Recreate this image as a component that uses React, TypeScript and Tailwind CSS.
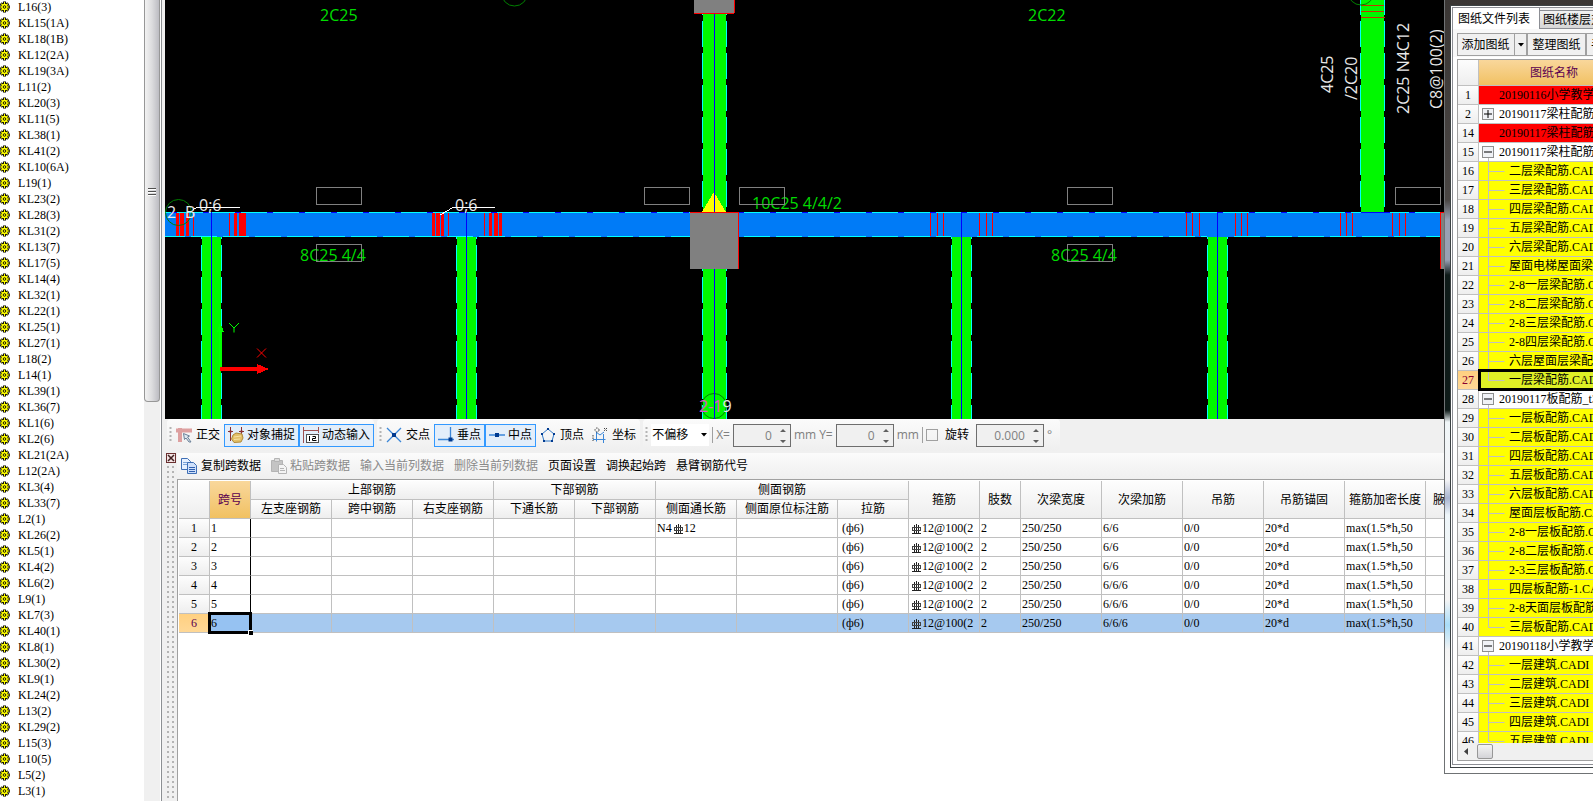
import { ReactNode, useState } from 'react';
import clsx from 'clsx';

const MEMBERS = [
  'L16(3)', 'KL15(1A)', 'KL18(1B)', 'KL12(2A)', 'KL19(3A)', 'L11(2)', 'KL20(3)', 'KL11(5)', 'KL38(1)', 'KL41(2)',
  'KL10(6A)', 'L19(1)', 'KL23(2)', 'KL28(3)', 'KL31(2)', 'KL13(7)', 'KL17(5)', 'KL14(4)', 'KL32(1)', 'KL22(1)',
  'KL25(1)', 'KL27(1)', 'L18(2)', 'L14(1)', 'KL39(1)', 'KL36(7)', 'KL1(6)', 'KL2(6)', 'KL21(2A)', 'L12(2A)',
  'KL3(4)', 'KL33(7)', 'L2(1)', 'KL26(2)', 'KL5(1)', 'KL4(2)', 'KL6(2)', 'L9(1)', 'KL7(3)', 'KL40(1)',
  'KL8(1)', 'KL30(2)', 'KL9(1)', 'KL24(2)', 'L13(2)', 'KL29(2)', 'L15(3)', 'L10(5)', 'L5(2)', 'L3(1)'
];

type Kind = 'red' | 'open' | 'closed' | 'child' | 'last';

const SHEETS: { no: number; name: string; kind: Kind }[] = [
  { no: 1, name: '20190116小学教学楼', kind: 'red' },
  { no: 2, name: '20190117梁柱配筋_t3', kind: 'closed' },
  { no: 14, name: '20190117梁柱配筋_t3', kind: 'red' },
  { no: 15, name: '20190117梁柱配筋_t3', kind: 'open' },
  { no: 16, name: '二层梁配筋.CADI', kind: 'child' },
  { no: 17, name: '三层梁配筋.CADI', kind: 'child' },
  { no: 18, name: '四层梁配筋.CADI', kind: 'child' },
  { no: 19, name: '五层梁配筋.CADI', kind: 'child' },
  { no: 20, name: '六层梁配筋.CADI', kind: 'child' },
  { no: 21, name: '屋面电梯屋面梁配筋', kind: 'child' },
  { no: 22, name: '2-8一层梁配筋.CADI', kind: 'child' },
  { no: 23, name: '2-8二层梁配筋.CADI', kind: 'child' },
  { no: 24, name: '2-8三层梁配筋.CADI', kind: 'child' },
  { no: 25, name: '2-8四层梁配筋.CADI', kind: 'child' },
  { no: 26, name: '六层屋面层梁配筋', kind: 'child' },
  { no: 27, name: '一层梁配筋.CADI', kind: 'last' },
  { no: 28, name: '20190117板配筋_t3', kind: 'open' },
  { no: 29, name: '一层板配筋.CADI', kind: 'child' },
  { no: 30, name: '二层板配筋.CADI', kind: 'child' },
  { no: 31, name: '四层板配筋.CADI', kind: 'child' },
  { no: 32, name: '五层板配筋.CADI', kind: 'child' },
  { no: 33, name: '六层板配筋.CADI', kind: 'child' },
  { no: 34, name: '屋面层板配筋.CADI', kind: 'child' },
  { no: 35, name: '2-8一层板配筋.CADI', kind: 'child' },
  { no: 36, name: '2-8二层板配筋.CADI', kind: 'child' },
  { no: 37, name: '2-3三层板配筋.CADI', kind: 'child' },
  { no: 38, name: '四层板配筋-1.CADI', kind: 'child' },
  { no: 39, name: '2-8天面层板配筋', kind: 'child' },
  { no: 40, name: '三层板配筋.CADI', kind: 'last' },
  { no: 41, name: '20190118小学教学楼', kind: 'open' },
  { no: 42, name: '一层建筑.CADI', kind: 'child' },
  { no: 43, name: '二层建筑.CADI', kind: 'child' },
  { no: 44, name: '三层建筑.CADI', kind: 'child' },
  { no: 45, name: '四层建筑.CADI', kind: 'child' },
  { no: 46, name: '五层建筑.CADI', kind: 'last' }
];

const COLS = [31, 41, 81, 81, 81, 81, 81, 81, 101, 71, 71, 41, 81, 81, 81, 81, 81, 81];
const SPANS = ['6/6', '6/6', '6/6', '6/6/6', '6/6/6', '6/6/6'];

const song = "font-['Liberation_Serif','Noto_Sans_CJK_SC',serif]";
const headCell = 'border-r border-b border-[#c0c0c0] bg-linear-to-b from-[#fdfdfd] to-[#eeeeee] p-0 text-center font-normal whitespace-nowrap';
const bodyCell = 'h-[19px] border-r border-b border-[#c0c0c0] p-0 pl-px whitespace-nowrap overflow-hidden';

function Gear() {
  return (
    <svg width="10" height="12" viewBox="0 0 10 12" className="shrink-0">
      <path d="M4.500 .5v11M-1 6h11M.8 2.300l7.400 7.400M8.200 2.300L.8 9.700" stroke="#000" strokeWidth="3" />
      <path d="M4.500 1v10M-.5 6h10M1.200 2.700l6.600 6.600M7.800 2.700L1.200 9.300" stroke="#ffff00" strokeWidth="1.100" />
      <circle cx="4.500" cy="6" r="2.500" fill="#ffff00" stroke="#ffff00" strokeWidth="1.400" />
      <circle cx="4.500" cy="6" r="1.300" fill="#ffff00" stroke="#000" strokeWidth="0.900" />
    </svg>
  );
}

function MemberList() {
  return (
    <aside className="flex shrink-0 border-r border-[#8c8f93]">
      <ul className={clsx('-mt-px w-36 text-xs leading-4', song)}>
        {MEMBERS.map((m) => (
          <li key={m} className="flex h-4 items-center gap-2">
            <Gear />
            {m}
          </li>
        ))}
      </ul>
      <div className="w-[17px] border-r border-white bg-[#f0f0f0]">
        <div className="flex h-[402px] items-center justify-center rounded-b-sm border border-t-0 border-[#979797] bg-linear-to-r from-[#f2f2f2] via-[#dcdcde] to-[#bcbcc2]">
          <svg width="8" height="9" className="mb-4" shapeRendering="crispEdges">
            <path d="M0 .5h8M0 3.500h8M0 6.500h8" stroke="#505050" />
            <path d="M0 1.500h8M0 4.500h8M0 7.500h8" stroke="#fff" />
          </svg>
        </div>
      </div>
    </aside>
  );
}

const beams = [
  { x: 201, w: 21, y1: 237, y2: 419 },
  { x: 456, w: 21, y1: 237, y2: 419 },
  { x: 702, w: 25, y1: 14, y2: 212 },
  { x: 702, w: 25, y1: 269, y2: 419 },
  { x: 951, w: 21, y1: 237, y2: 419 },
  { x: 1207, w: 21, y1: 237, y2: 419 },
  { x: 1360, w: 25, y1: 0, y2: 212 }
];

// [x, width] of the stirrup bars
const stirrups = [
  [176, 3], [180, 4], [186, 3], [193, 1], [229, 1], [234, 3], [239, 7],
  [432, 3], [436, 4], [441, 3], [448, 1], [484, 1], [489, 3], [494, 4], [499, 3],
  [930, 1], [937, 1], [943, 1], [979, 1], [986, 1], [992, 1],
  [1186, 1], [1192, 1], [1199, 1], [1235, 1], [1241, 1], [1247, 1],
  [1340, 1], [1346, 1], [1352, 1], [1392, 1], [1399, 1], [1405, 1]
];

const tags = [[316, 187], [644, 187], [739, 187], [1067, 187], [1395, 187], [316, 244], [1067, 244]];

// [from, to, dash offset]
const topEdge = [[165, 690, 20], [738, 961, 26], [961, 1217, 26], [1217, 1440, 26]];
const bottomEdge = [[165, 690, 6], [738, 951, 26], [972, 1207, 27], [1228, 1440, 26]];

function Drawing() {
  return (
    <svg className="h-[419px] w-full shrink-0 bg-black font-['Open_Sans','Noto_Sans',sans-serif]" shapeRendering="crispEdges">
      <g transform="translate(-165 0)">
        {beams.map((b) => {
          const sides = `M${b.x + 0.5} ${b.y1}V${b.y2}M${b.x + b.w - 0.5} ${b.y1}V${b.y2}`;
          return (
            <g key={`${b.x}-${b.y1}`}>
              <rect x={b.x} y={b.y1} width={b.w} height={b.y2 - b.y1} fill="#00f800" />
              <path d={sides} stroke="#000" />
              <path d={sides} stroke="#00ffff" strokeDasharray="26 6" strokeDashoffset={(b.y1 + 11) % 32} />
            </g>
          );
        })}
        <rect x="165" y="212" width="1275" height="25" fill="#007bf7" />
        <path d="M165 212.500H1440" stroke="#0000ff" />
        {topEdge.map(([a, b, o]) => (
          <path key={a} d={`M${a} 212.5H${b}`} stroke="#00ffff" strokeDasharray="26 6" strokeDashoffset={o} />
        ))}
        {bottomEdge.map(([a, b, o]) => (
          <path key={a} d={`M${a} 236.5H${b}`} stroke="#00ffff" strokeDasharray="26 6" strokeDashoffset={o} />
        ))}
        <path d="M1361 212.500h29" stroke="#0000ff" />
        <path d="M211.500 212V419M466.500 212V419M961.500 212V419M1217.500 212V419" stroke="#0000ff" />
        {stirrups.map(([x, w]) => (
          <rect key={x} x={x} y="213" width={w} height="23" fill="#ff0000" />
        ))}
        <path d="M1361 5.500h23M1361 11.500h23M1361 17.500h24" stroke="#c83200" />
        <path d="M714 192L702 212h24z" fill="#ffff00" />
        <rect x="694" y="0" width="40" height="13" fill="#808080" />
        <path d="M694 13.500h40M734.500 0v13" stroke="#ff0000" />
        <g fill="none" stroke="#007f00" shapeRendering="auto">
          <circle cx="514.500" cy="-7" r="13" />
          <circle cx="1361" cy="-8" r="13" />
          <circle cx="178.500" cy="212.500" r="13" />
          <circle cx="714" cy="406" r="12.500" />
        </g>
        <g fontSize="16" shapeRendering="auto">
          <g fill="#00dc00">
            <text x="320" y="21">2C25</text>
            <text x="1028" y="21">2C22</text>
            <text x="300" y="261">8C25 4/4</text>
            <text x="1051" y="261">8C25 4/4</text>
            <text x="752" y="209">10C25 4/4/2</text>
          </g>
          <g fill="#e8e8e8">
            <text x="199" y="211">0;6</text>
            <text x="455" y="211">0;6</text>
            <text x="167" y="218">2</text>
            <text x="185" y="218">B</text>
            <text x="699" y="412"><tspan fill="#e050d0">2-1</tspan>9</text>
            <text transform="translate(1333 93) rotate(-90)">4C25</text>
            <text transform="translate(1357 100) rotate(-90)">/2C20</text>
            <text transform="translate(1409 114) rotate(-90)">2C25 N4C12</text>
            <text transform="translate(1442 109) rotate(-90)">C8@100(2)</text>
          </g>
        </g>
        <path d="M714.500 14V419" stroke="#0000ff" />
        <rect x="690" y="212" width="48" height="57" fill="#808080" />
        <path d="M690 212.500h48.500V269" fill="none" stroke="#ff0000" />
        <rect x="1441" y="213" width="40" height="56" fill="#808080" />
        <path d="M1480 212.500h-39.500V269" fill="none" stroke="#ff0000" />
        <path d="M193 209.500l4-2h43M440 215l13-7.500h42" fill="none" stroke="#fff" />
        <g fill="none" stroke="#808080">
          {tags.map(([x, y]) => (
            <rect key={`${x}-${y}`} x={x + 0.5} y={y + 0.5} width="45" height="17" />
          ))}
        </g>
        <path d="M219 369V332h-2l3-10 4 10h-2v37z" fill="#00ff00" />
        <path d="M220 367h37v-3l12 5-12 5v-3h-37z" fill="#ff0000" />
        <g fill="none" shapeRendering="auto">
          <path d="M257 348.500l9 9M266 348.500l-9 9" stroke="#ff0000" />
          <path d="M229 323l5 5 5-5M234 328v4.500" stroke="#00ff00" />
        </g>
      </g>
    </svg>
  );
}

function Grip() {
  return (
    <svg width="3" height="16" className="shrink-0">
      <path d="M1.500 0v16" stroke="#b4b4b4" strokeWidth="2" strokeDasharray="2 2" />
    </svg>
  );
}

const icons: Record<string, ReactNode> = {
  ortho: (
    <g fill="none">
      <path d="M0 3.500h16M4 1v14" stroke="#dda0a0" strokeWidth="4" />
      <path d="M7.500 6.500l6 2.500-2 1 3.500 5h-2l-3-4-1.500 1.500z" fill="#dfe8f0" stroke="#6a8098" />
    </g>
  ),
  snap: (
    <g>
      <path d="M2.500 0v14M13.500 0v9M0 4.500h5M11 4.500h5" stroke="#8a3030" fill="none" />
      <path d="M1 4.500l1.500-2L4 4.500 2.500 6.500zM12 4.500l1.500-2 1.500 2-1.500 2z" fill="#8a3030" />
      <path d="M5 8l3-2 6 1 1 4-2 4-7 .5L3.500 12z" fill="#e3c068" stroke="#b08a38" />
      <path d="M6 10l7-1M6 12.500l6-.5" stroke="#f6e2a4" />
    </g>
  ),
  dyn: (
    <g fill="none" stroke="#a05050">
      <path d="M.5 0v16M15.500 0v6M1 3.500h14" />
      <rect x="3.500" y="7.500" width="12" height="8" fill="#fff" stroke="#505050" />
      <path d="M6.500 9v5M9.500 9.500h3v2h-3v2h4" stroke="#000" />
    </g>
  ),
  cross: (
    <g>
      <path d="M1 1l14 14M15 1L1 15" stroke="#3a86d8" strokeWidth="1.300" />
      <rect x="6" y="6" width="4" height="4" fill="#003a90" />
    </g>
  ),
  perp: (
    <g>
      <path d="M0 12.500h16M12.500 0v13" stroke="#3a86d8" strokeWidth="1.300" />
      <rect x="10.500" y="10.500" width="4" height="4" fill="#003a90" />
    </g>
  ),
  mid: (
    <g>
      <path d="M0 8h16" stroke="#3a86d8" strokeWidth="1.500" />
      <rect x="6" y="6" width="4" height="4" fill="#003a90" />
    </g>
  ),
  vertex: (
    <g fill="none" stroke="#2f78c8">
      <path d="M8 2l6 5-2 7H4L2 7z" />
      <path d="M8 1v2M1 7h2M13 7h2M4 13v2M12 13v2" stroke="#003a90" strokeWidth="2" />
    </g>
  ),
  coord: (
    <g fill="none" stroke="#3a86d8">
      <path d="M4.500 5v9.500M1 12.500h12.500M11.500 7v9M4 5l4 3 4-3" />
      <circle cx="5" cy="3" r="2" stroke="#404040" strokeDasharray="1.500 1" />
      <path d="M12 1l3 3M15 1l-3 3M1 8v6" stroke="#404040" strokeDasharray="1.500 1" />
    </g>
  ),
  copy: (
    <g stroke="#3f6fb5" fill="#e6f0ff">
      <path d="M.5.5h6l3 3v8h-9z" />
      <path d="M2 4.500h5M2 6.500h5" stroke="#7ba3d8" />
      <path d="M6.500 4.500h6l3 3v8h-9z" fill="#cfe0fa" />
      <path d="M8 9.500h6M8 11.500h6M8 13.500h6" stroke="#2f5fae" />
    </g>
  ),
  paste: (
    <g stroke="#b4b4b4" fill="#c4c4c4">
      <path d="M.5 2.500h11v11H.5z" />
      <path d="M3.500.5h5v3h-5z" fill="#dcdcdc" />
      <path d="M7.500 6.500h5l3 3v6h-8z" fill="#f4f4f4" />
      <path d="M9 10.500h4M9 12.500h5" />
    </g>
  )
};

function Tool({ icon, label, on, disabled }: { icon?: string; label: string; on?: boolean; disabled?: boolean }) {
  return (
    <button
      disabled={disabled}
      className={clsx(
        'flex h-[23px] shrink-0 items-center border px-[3px] whitespace-nowrap',
        on || disabled ? 'gap-[3px]' : 'gap-1',
        on ? 'border-[#3399ff] bg-[#e3eefa]' : 'border-transparent',
        disabled && 'text-[#8a8a8a]'
      )}
    >
      {icon && (
        <svg width="16" height="16" viewBox="0 0 16 16">
          {icons[icon]}
        </svg>
      )}
      {label}
    </button>
  );
}

function Spin({ id, label, value, wide }: { id: string; label: string; value: string; wide?: boolean }) {
  return (
    <span className={clsx('flex h-[23px] items-center border border-[#6e6e6e] bg-[#f0f0f0]', wide ? 'w-[68px]' : 'w-[58px]')}>
      <input id={id} aria-label={label} defaultValue={value} className="h-full w-0 flex-1 text-right text-[#808080]" />
      <svg width="18" height="21" className="shrink-0 pl-1">
        <path d="M4 7l3-3 3 3zM4 15l3 3 3-3z" fill="#606060" />
      </svg>
    </span>
  );
}

const group = 'flex h-8 items-center rounded bg-linear-to-b from-[#fbfbfb] to-[#efefef]';

function SnapBar() {
  return (
    <div className="flex h-[34px] shrink-0 gap-[3px] overflow-hidden bg-[#f0f0f0] pl-[2px] text-xs">
      <div className={clsx(group, 'pl-[2px]')}>
        <Grip />
        <Tool icon="ortho" label="正交" />
        <Tool icon="snap" label="对象捕捉" on />
        <Tool icon="dyn" label="动态输入" on />
      </div>
      <div className={clsx(group, 'pl-[2px]')}>
        <Grip />
        <Tool icon="cross" label="交点" />
        <Tool icon="perp" label="垂点" on />
        <Tool icon="mid" label="中点" on />
        <Tool icon="vertex" label="顶点" />
        <Tool icon="coord" label="坐标" />
      </div>
      <div className={clsx(group, 'gap-[3px] pl-[2px] pr-2 text-[#808080]')}>
        <Grip />
        <span className="flex h-[22px] items-center bg-white">
          <select aria-label="偏移" className="w-12 appearance-none pl-px text-black">
            <option>不偏移</option>
          </select>
          <svg width="10" height="6">
            <path d="M2 1h6L5 4.500z" fill="#000" />
          </svg>
        </span>
        <span className="h-4 w-px bg-[#a0a0a0]" />
        <label htmlFor="dx">X=</label>
        <Spin id="dx" label="X" value="0" />
        mm
        <label htmlFor="dy">Y=</label>
        <Spin id="dy" label="Y" value="0" />
        mm
        <span className="h-4 w-px bg-[#a0a0a0]" />
        <input id="rot" type="checkbox" className="size-3 appearance-none border border-[#a0a0a0]" />
        <label htmlFor="rot" className="px-1 text-black">旋转</label>
        <Spin id="angle" label="旋转角度" value="0.000" wide />
        °
      </div>
    </div>
  );
}

// HRB400 rebar mark
function Rebar() {
  return (
    <svg width="12" height="10" className="inline" shapeRendering="crispEdges">
      <path d="M4.500 1v8M6.500 0v9M8.500 1v8M2 9.500h9" stroke="#222" fill="none" />
      <path d="M2.500 3.500h8v3h-8z" fill="none" stroke="#444" />
    </svg>
  );
}

function SpanTable() {
  const [selected, setSelected] = useState(5);
  return (
    <table className={clsx('w-[1328px] table-fixed border-separate border-spacing-0 text-xs leading-4', song)}>
      <colgroup>
        {COLS.map((w, i) => (
          <col key={i} style={{ width: w }} />
        ))}
      </colgroup>
      <thead>
        <tr className="h-[19px]">
          <th rowSpan={2} className={headCell} />
          <th rowSpan={2} className="border-r border-b border-[#c0c0c0] bg-linear-to-b from-[#f9d79b] to-[#f1c161] p-0 font-normal text-[#5a0050]">跨号</th>
          <th colSpan={3} className={headCell}>上部钢筋</th>
          <th colSpan={2} className={headCell}>下部钢筋</th>
          <th colSpan={3} className={headCell}>侧面钢筋</th>
          {['箍筋', '肢数', '次梁宽度', '次梁加筋', '吊筋', '吊筋锚固', '箍筋加密长度'].map((h) => (
            <th key={h} rowSpan={2} className={headCell}>{h}</th>
          ))}
          <th rowSpan={2} className={headCell}>
            <span className="block pl-[7px] text-left">腋长</span>
          </th>
        </tr>
        <tr className="h-[19px]">
          {['左支座钢筋', '跨中钢筋', '右支座钢筋', '下通长筋', '下部钢筋', '侧面通长筋', '侧面原位标注筋', '拉筋'].map((h) => (
            <th key={h} className={headCell}>{h}</th>
          ))}
        </tr>
      </thead>
      <tbody>
        {SPANS.map((extra, i) => {
          const on = i === selected;
          return (
            <tr key={i} className={clsx('h-[19px]', on && 'bg-[#a6c9ef]')} onClick={() => setSelected(i)}>
              <th className={clsx(headCell, 'h-[19px]', on && 'from-[#ffd080] to-[#ffd896] text-[#5a0050]')}>{i + 1}</th>
              <td className={clsx('relative h-[19px] border-r border-b border-r-black border-b-[#c0c0c0] p-0 pl-px', on && 'bg-[#96c2f2]')}>
                {i + 1}
                {on && (
                  <span className="absolute -inset-[2px] border-3 border-black">
                    <span className="absolute -right-[4px] -bottom-[4px] size-[5px] border-t border-l border-white bg-black" />
                  </span>
                )}
              </td>
              {[0, 1, 2, 3, 4].map((c) => (
                <td key={c} className={bodyCell} />
              ))}
              <td className={bodyCell}>{i === 0 && <>N4<Rebar />12</>}</td>
              <td className={bodyCell} />
              <td className={bodyCell}>&nbsp;(ф6)</td>
              <td className={bodyCell}><Rebar />12@100(2</td>
              <td className={bodyCell}>2</td>
              <td className={bodyCell}>250/250</td>
              <td className={bodyCell}>{extra}</td>
              <td className={bodyCell}>0/0</td>
              <td className={bodyCell}>20*d</td>
              <td className={bodyCell}>max(1.5*h,50</td>
              <td className={bodyCell} />
            </tr>
          );
        })}
      </tbody>
    </table>
  );
}

function SpanPanel() {
  return (
    <section className="flex min-h-0 flex-1 bg-[#f0f0f0]">
      <div className="flex w-3 shrink-0 flex-col">
        <button aria-label="关闭" className="ml-px">
          <svg width="10" height="11">
            <rect x="0.500" y="0.500" width="9" height="9" fill="#f4e4e4" stroke="#6a3030" />
            <path d="M2 2l6 6M8 2L2 8" stroke="#402020" strokeWidth="1.500" />
          </svg>
        </button>
        <svg className="w-full flex-1">
          <defs>
            <pattern id="dots" width="5" height="5" patternUnits="userSpaceOnUse">
              <rect x="2" y="2" width="2" height="2" fill="#b4b4b4" />
            </pattern>
          </defs>
          <rect width="10" height="100%" fill="url(#dots)" />
        </svg>
      </div>
      <div className="flex min-w-0 flex-1 flex-col overflow-hidden">
        <div className="flex h-[26px] shrink-0 items-center gap-[2px] bg-linear-to-b from-[#fbfbfb] to-[#efefef] text-xs">
          <Tool icon="copy" label="复制跨数据" />
          <Tool icon="paste" label="粘贴跨数据" disabled />
          <Tool label="输入当前列数据" disabled />
          <Tool label="删除当前列数据" disabled />
          <Tool label="页面设置" />
          <Tool label="调换起始跨" />
          <Tool label="悬臂钢筋代号" />
        </div>
        <div className="flex-1 overflow-hidden border-t border-l border-[#a0a0a0] bg-white pt-px pl-px">
          <SpanTable />
        </div>
      </div>
    </section>
  );
}

function TreeMark({ kind }: { kind: Kind }) {
  if (kind === 'red') return <span className="w-5 shrink-0" />;
  if (kind === 'open' || kind === 'closed') {
    return (
      <svg width="20" height="18" className="shrink-0">
        <rect x="3.500" y="3.500" width="11" height="11" fill="#f0f2f6" stroke="#8e8f8f" />
        <path d={kind === 'open' ? 'M5 9h8' : 'M5 9h8M9 5v8'} stroke="#000" />
        {kind === 'open' && <path d="M9.500 15v4" stroke="#c0c0c0" />}
      </svg>
    );
  }
  return (
    <svg width="30" height="19" className="shrink-0">
      <path d={kind === 'last' ? 'M9.500 0v9.500h16' : 'M9.500 0v19M9.500 9.500h16'} fill="none" stroke="#c0c0c0" />
    </svg>
  );
}

const toolButton = 'h-[23px] shrink-0 border border-[#a0a0a0] bg-[#f0f0f0] whitespace-nowrap';

function SheetWindow() {
  return (
    <aside className="flex w-[149px] shrink-0 flex-col overflow-hidden bg-white pb-[27px] text-xs">
      <div className="flex min-h-0 w-60 flex-1 flex-col border-b border-l border-[#6f7274] bg-[linear-gradient(to_bottom,#3a3634_0,#4a4644_200px,#98a0b4_220px,#98a0b4_260px,#0e1a18_275px,#0e1a18_410px,#f0f6f8_422px,#f4f4f6_480px,#a8b4d0_498px,#eef6fa_515px,#f4f4f4_600px,#a8dcf8_625px,#f4f4f4_650px,#fff_700px)] pt-[5px] pb-[5px] pl-[5px]">
        <div className="flex min-h-0 flex-1 flex-col border border-[#3c4244] bg-white pt-px pb-[2px] pl-px">
          <div className="flex min-h-0 flex-1 flex-col border border-[#8c8e94] pb-[3px]">
            <div className="flex h-[21px] shrink-0 items-end bg-[#f0f0f0]" role="tablist">
              <button role="tab" className="h-full w-[87px] shrink-0 border-r border-[#8c8e94] bg-white pr-1 text-center">图纸文件列表</button>
              <button role="tab" className="h-[19px] shrink-0 border-t border-b border-[#8c8e94] bg-linear-to-b from-[#f2f2f2] to-[#d6d6d6] pl-[3px]">图纸楼层对照表</button>
            </div>
            <div className="flex shrink-0 bg-[#f8f8f8] pt-1 pb-px pl-1">
              <div className="flex">
                <button className={clsx(toolButton, 'w-[58px] pr-px text-center')}>添加图纸</button>
                <button aria-label="更多" className={clsx(toolButton, 'w-[12px] border-l-0 pl-[2px]')}>
                  <svg width="7" height="4">
                    <path d="M1 0h6L4 3.500z" fill="#000" />
                  </svg>
                </button>
              </div>
              <button className={clsx(toolButton, 'w-[59px] text-center')}>整理图纸</button>
              <button className={clsx(toolButton, 'pl-1')}>手动分割</button>
            </div>
            <div className="mt-[2px] ml-1 flex min-h-0 flex-1 flex-col border border-[#a0a0a0] bg-[#f0f0f0]">
              <div className="min-h-0 flex-1 overflow-hidden bg-white">
                <table className={clsx('w-full table-fixed border-separate border-spacing-0 leading-4', song)}>
                  <thead>
                    <tr className="h-[26px]">
                      <th className={clsx(headCell, 'w-[21px]')} />
                      <th className="border-b border-[#c0c0c0] bg-linear-to-b from-[#f9d79b] to-[#f1c161] p-0 pl-[51px] text-left font-normal text-[#5a0050]">图纸名称</th>
                    </tr>
                  </thead>
                  <tbody>
                    {SHEETS.map((s) => (
                      <tr key={s.no} className="h-[19px]">
                        <th className={clsx(headCell, 'h-[19px]', s.no === 27 && 'from-[#ffd080] to-[#ffd896] text-[#8a0030]')}>{s.no}</th>
                        <td
                          className={clsx(
                            'relative h-[19px] border-b border-[#c0c0c0] p-0',
                            s.kind === 'red' && 'bg-[#ff0000]',
                            (s.kind === 'child' || s.kind === 'last') && (s.no === 27 ? 'bg-[#dff026]' : 'bg-[#ffff00]')
                          )}
                        >
                          <span className="flex h-[18px] items-center overflow-hidden whitespace-nowrap">
                            <TreeMark kind={s.kind} />
                            {s.name}
                          </span>
                          {s.no === 27 && <span className="absolute -top-[2px] right-0 -bottom-[2px] -left-px border-3 border-black" />}
                        </td>
                      </tr>
                    ))}
                  </tbody>
                </table>
              </div>
              <div className="flex h-[17px] shrink-0 items-center gap-2">
                <svg width="11" height="9">
                  <path d="M10 1v7L6 4.500z" fill="#404040" />
                </svg>
                <span className="h-[15px] w-4 rounded-xs border border-[#979797] bg-linear-to-b from-[#f4f4f4] to-[#d4d4d8]" />
              </div>
            </div>
          </div>
        </div>
      </div>
    </aside>
  );
}

export default function App() {
  return (
    <div className="flex h-screen overflow-hidden bg-white font-['Open_Sans','Noto_Sans_CJK_SC',sans-serif] text-black">
      <MemberList />
      <main className="flex min-w-0 flex-1 flex-col border-l-3 border-[#f0f0f0]">
        <Drawing />
        <SnapBar />
        <SpanPanel />
      </main>
      <SheetWindow />
    </div>
  );
}
